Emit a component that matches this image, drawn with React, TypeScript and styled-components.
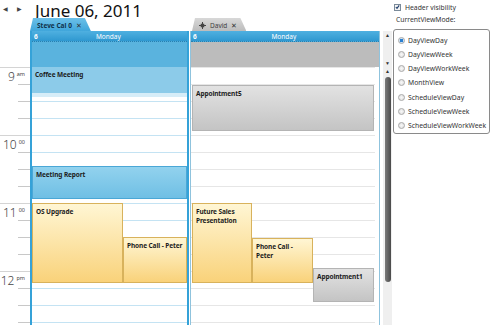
import React from "react";
import styled, { createGlobalStyle, css } from "styled-components";

const GlobalStyle = createGlobalStyle`
	html, body {
		margin: 0;
		padding: 0;
		background: #ffffff;
		font-family: "Noto Sans", "Open Sans", sans-serif;
		color: #222;
	}
`;

type Tone = "blue" | "lightblue" | "yellow" | "gray";

type TAppointment = {
	title: string;
	top: number;
	height: number;
	left: number;
	width: number;
	tone: Tone;
};

type TResource = {
	name: string;
	tone: "blue" | "gray";
	width: number;
	pinned?: boolean;
	appointments: TAppointment[];
};

const resources: TResource[] = [
	{
		name: "Steve Cal 0",
		tone: "blue",
		width: 159,
		appointments: [
			{ title: "Coffee Meeting", top: 0, height: 30, left: 0, width: 155, tone: "lightblue" },
			{ title: "Meeting Report", top: 99, height: 33, left: 0, width: 155, tone: "blue" },
			{ title: "OS Upgrade", top: 136, height: 80, left: 0, width: 91, tone: "yellow" },
			{ title: "Phone Call - Peter", top: 170, height: 46, left: 91, width: 64, tone: "yellow" },
		],
	},
	{
		name: "David",
		tone: "gray",
		width: 190,
		pinned: true,
		appointments: [
			{ title: "Appointment5", top: 18, height: 46, left: 1, width: 182, tone: "gray" },
			{ title: "Future Sales Presentation", top: 136, height: 80, left: 1, width: 60, tone: "yellow" },
			{ title: "Phone Call - Peter", top: 171, height: 45, left: 61, width: 61, tone: "yellow" },
			{ title: "Appointment1", top: 201, height: 34, left: 122, width: 61, tone: "gray" },
		],
	},
];

const hours = [
	{ n: "9", s: "am" },
	{ n: "10", s: "00" },
	{ n: "11", s: "00" },
	{ n: "12", s: "pm" },
];

const viewModes = [
	"DayViewDay",
	"DayViewWeek",
	"DayViewWorkWeek",
	"MonthView",
	"ScheduleViewDay",
	"ScheduleViewWeek",
	"ScheduleViewWorkWeek",
];

const Page = styled.div`
	display: flex;
	width: 500px;
	height: 325px;
	overflow: hidden;
`;

const Scheduler = styled.div`
	display: flex;
	flex-direction: column;
	width: 392px;
	height: 325px;
`;

const TopBar = styled.div`
	display: flex;
	align-items: center;
	height: 18px;
	padding-left: 3px;
`;

const NavArrow = styled.span`
	font-size: 6px;
	color: #444;
	width: 14px;
	line-height: 1;
`;

const Title = styled.h1`
	margin: 0 0 0 4px;
	font-size: 17px;
	font-weight: 400;
	color: #111;
	line-height: 18px;
	padding-top: 4px;
`;

const Columns = styled.div`
	display: flex;
	flex: 1;
	min-height: 0;
	overflow: hidden;
`;

const TimeColumn = styled.div`
	width: 30px;
	flex-shrink: 0;
	padding-top: 49px;
`;

const HourBlock = styled.div`
	display: flex;
	justify-content: flex-end;
	align-items: flex-start;
	gap: 2px;
	height: 68px;
	box-sizing: border-box;
	border-top: 1px solid #d4d4d4;
	padding: 3px 5px 0 0;
	color: #444;
	background-image: linear-gradient(#c8c8c8, #c8c8c8), linear-gradient(#c8c8c8, #c8c8c8),
		linear-gradient(#c8c8c8, #c8c8c8);
	background-size: 12px 1px;
	background-repeat: no-repeat;
	background-position: right 0 top 16px, right 0 top 33px, right 0 top 50px;
`;

const HourNum = styled.span`
	font-size: 12px;
	font-weight: 300;
	line-height: 12px;
`;

const HourSup = styled.span`
	font-size: 5.5px;
	line-height: 6px;
`;

const ResourceColumn = styled.div<{ $width: number }>`
	display: flex;
	flex-direction: column;
	width: ${({ $width }) => $width}px;
	flex-shrink: 0;
	& + & {
		margin-left: 1px;
	}
`;

const TabRow = styled.div`
	display: flex;
	height: 13px;
`;

const Tab = styled.div<{ $tone: "blue" | "gray" }>`
	display: flex;
	align-items: center;
	gap: 4px;
	height: 13px;
	box-sizing: border-box;
	padding: 1px 9px 0 7px;
	font-size: 6.5px;
	white-space: nowrap;
	clip-path: polygon(3px 0, calc(100% - 6px) 0, 100% 100%, 0 100%);
	${({ $tone }) =>
		$tone === "blue"
			? css`
					background: linear-gradient(#6cc0e8, #40a6db);
					color: #10324a;
					font-weight: 700;
			  `
			: css`
					margin-left: 2px;
					background: linear-gradient(#d8d8d8, #bcbcbc);
					color: #444;
			  `}
`;

const TabClose = styled.span`
	font-size: 7px;
	font-weight: 400;
	color: #333;
`;

const Panel = styled.div<{ $tone: "blue" | "gray" }>`
	display: flex;
	flex-direction: column;
	flex: 1;
	min-height: 0;
	border-style: solid;
	border-color: ${({ $tone }) => ($tone === "blue" ? "#35a2d8" : "#8fc3dd")};
	border-width: ${({ $tone }) => ($tone === "blue" ? "0 2px 0 2px" : "0 1px 0 1px")};
`;

const DayHeader = styled.div`
	display: flex;
	align-items: center;
	height: 10px;
	padding: 0 2px;
	background: linear-gradient(#4fb0e0, #2f98d0);
	border-bottom: 1px dotted #2a7fae;
	color: #ffffff;
	font-size: 6.5px;
`;

const DayNum = styled.span`
	font-weight: 700;
`;

const DayName = styled.span`
	flex: 1;
	text-align: center;
	padding-right: 6px;
`;

const AllDay = styled.div<{ $tone: "blue" | "gray" }>`
	height: 25px;
	background: ${({ $tone }) => ($tone === "blue" ? "#5ab3de" : "#bcbcbc")};
`;

const Grid = styled.div<{ $tone: "blue" | "gray" }>`
	position: relative;
	flex: 1;
	background-color: #ffffff;
	background-image: repeating-linear-gradient(
		to bottom,
		${({ $tone }) => ($tone === "blue" ? "#c4e3f3" : "#e6e6e6")} 0 1px,
		transparent 1px 17px
	);
	${({ $tone }) =>
		$tone === "gray" &&
		css`
			margin-right: 4px;
		`}
`;

const toneStyles: Record<Tone, ReturnType<typeof css>> = {
	blue: css`
		background: linear-gradient(#92d2ee, #6fbfe4);
		border: 1px solid #4aa7d6;
	`,
	lightblue: css`
		background: #8ccbe9;
		border-bottom: 4px solid #d6edf8;
	`,
	yellow: css`
		background: linear-gradient(#fff6d4, #f9d27a);
		border: 1px solid #d8b25c;
	`,
	gray: css`
		background: linear-gradient(#e2e2e2, #c4c4c4);
		border: 1px solid #b4b4b4;
	`,
};

const Appointment = styled.div<{ $tone: Tone }>`
	position: absolute;
	box-sizing: border-box;
	padding: 3px 1px 3px 3px;
	font-size: 6.5px;
	font-weight: 700;
	letter-spacing: -0.1px;
	line-height: 9px;
	color: #1d1d1d;
	overflow: hidden;
	${({ $tone }) => toneStyles[$tone]}
`;

const ScrollColumn = styled.div`
	display: flex;
	flex-direction: column;
	width: 12px;
	padding: 13px 0 0 3px;
	box-sizing: border-box;
`;

const ScrollBar = styled.div<{ $main?: boolean }>`
	display: flex;
	flex-direction: column;
	align-items: center;
	justify-content: ${({ $main }) => ($main ? "flex-start" : "space-between")};
	width: 9px;
	height: ${({ $main }) => ($main ? "auto" : "36px")};
	flex: ${({ $main }) => ($main ? 1 : "none")};
	background: #efefef;
	color: #333;
	font-size: 5px;
	line-height: 8px;
`;

const ScrollArrow = styled.span`
	height: 8px;
`;

const ScrollThumb = styled.div`
	width: 6px;
	height: 205px;
	margin-top: 2px;
	border-radius: 3px;
	background: linear-gradient(to right, #7a7a7a, #4a4a4a);
`;

const SidePanel = styled.div`
	display: flex;
	flex-direction: column;
	width: 97px;
	padding: 2px 0 0 1px;
	font-size: 6.8px;
	color: #333;
`;

const CheckRow = styled.label`
	display: flex;
	align-items: center;
	gap: 4px;
	height: 10px;
	padding-left: 1px;
`;

const CheckBox = styled.span`
	display: flex;
	align-items: center;
	justify-content: center;
	width: 7px;
	height: 7px;
	box-sizing: border-box;
	border: 1px solid #7a8a99;
	background: #f4f4f4;
`;

const ModeLabel = styled.div`
	padding: 3px 0 0 3px;
	height: 12px;
`;

const ModeBox = styled.div`
	display: flex;
	flex-direction: column;
	margin-top: 2px;
	width: 97px;
	height: 105px;
	box-sizing: border-box;
	border: 1px solid #8a8a8a;
	border-radius: 3px;
	padding: 3px 0 0 4px;
`;

const RadioRow = styled.div`
	display: flex;
	align-items: center;
	gap: 3px;
	height: 14.5px;
	white-space: nowrap;
`;

const Radio = styled.span<{ $checked?: boolean }>`
	flex-shrink: 0;
	width: 7px;
	height: 7px;
	box-sizing: border-box;
	border-radius: 50%;
	border: 1px solid #a9a9a9;
	background: ${({ $checked }) =>
		$checked
			? "radial-gradient(circle, #2a7fd0 0 1.6px, #cfe4f6 2px)"
			: "radial-gradient(circle, #f8f8f8, #dcdcdc)"};
`;

const PinIcon = () => (
	<svg width="7" height="7" viewBox="0 0 8 8">
		<path d="M4 0 L4 8 M0 4 L8 4" stroke="#444" strokeWidth="1.2" />
		<rect x="2" y="2" width="4" height="4" fill="#444" />
	</svg>
);

const CheckIcon = () => (
	<svg width="6" height="6" viewBox="0 0 6 6">
		<path d="M1 3 L2.4 4.6 L5 1" fill="none" stroke="#1a3b6a" strokeWidth="1.3" />
	</svg>
);

export default function App() {
	return (
		<>
			<GlobalStyle />
			<Page>
				<Scheduler>
					<TopBar>
						<NavArrow>◀</NavArrow>
						<NavArrow>▶</NavArrow>
						<Title>June 06, 2011</Title>
					</TopBar>
					<Columns>
						<TimeColumn>
							{hours.map((h) => (
								<HourBlock key={h.n}>
									<HourNum>{h.n}</HourNum>
									<HourSup>{h.s}</HourSup>
								</HourBlock>
							))}
						</TimeColumn>
						{resources.map((r) => (
							<ResourceColumn key={r.name} $width={r.width}>
								<TabRow>
									<Tab $tone={r.tone}>
										{r.pinned && <PinIcon />}
										{r.name}
										<TabClose>✕</TabClose>
									</Tab>
								</TabRow>
								<Panel $tone={r.tone}>
									<DayHeader>
										<DayNum>6</DayNum>
										<DayName>Monday</DayName>
									</DayHeader>
									<AllDay $tone={r.tone} />
									<Grid $tone={r.tone}>
										{r.appointments.map((a) => (
											<Appointment
												key={a.title + a.top}
												$tone={a.tone}
												style={{ top: a.top, left: a.left, width: a.width, height: a.height }}
											>
												{a.title}
											</Appointment>
										))}
									</Grid>
								</Panel>
							</ResourceColumn>
						))}
						<ScrollColumn>
							<ScrollBar>
								<ScrollArrow>▲</ScrollArrow>
								<ScrollArrow>▼</ScrollArrow>
							</ScrollBar>
							<ScrollBar $main>
								<ScrollArrow>▲</ScrollArrow>
								<ScrollThumb />
							</ScrollBar>
						</ScrollColumn>
					</Columns>
				</Scheduler>
				<SidePanel>
					<CheckRow>
						<CheckBox>
							<CheckIcon />
						</CheckBox>
						Header visibility
					</CheckRow>
					<ModeLabel>CurrentViewMode:</ModeLabel>
					<ModeBox>
						{viewModes.map((m, i) => (
							<RadioRow key={m}>
								<Radio $checked={i === 0} />
								{m}
							</RadioRow>
						))}
					</ModeBox>
				</SidePanel>
			</Page>
		</>
	);
}
